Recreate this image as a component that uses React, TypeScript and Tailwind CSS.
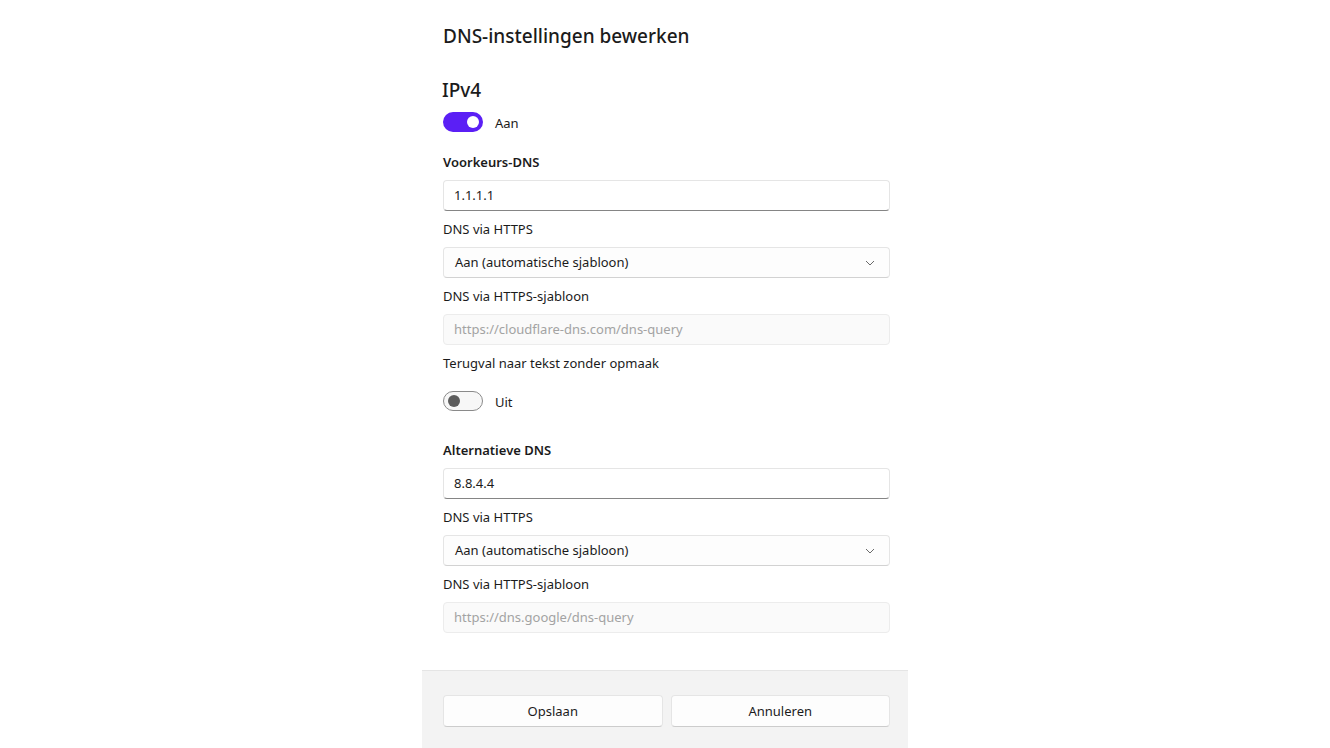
const font = { fontFamily: '"Segoe UI", "Noto Sans", "Open Sans", sans-serif' };

const Toggle = ({ on, label }: { on: boolean; label: string }) => (
  <div className="flex items-center h-5">
    {on ? (
      <div className="w-10 h-5 rounded-full bg-[#5b1ff5] flex items-center justify-end pr-[4px]">
        <div className="w-3 h-3 rounded-full bg-white" />
      </div>
    ) : (
      <div className="w-10 h-5 rounded-full border border-[#8a8a8a] bg-[#f7f7f7] flex items-center pl-[4px]">
        <div className="w-3 h-3 rounded-full bg-[#5c5c5c]" />
      </div>
    )}
    <span className="ml-3 pt-[3px] text-[13px] text-[#1b1b1b]">{label}</span>
  </div>
);

const Label = ({ children, bold }: { children: string; bold?: boolean }) => (
  <div className={`h-5 leading-5 text-[13px] text-[#1b1b1b] ${bold ? "font-semibold" : ""}`}>{children}</div>
);

const TextInput = ({ value }: { value: string }) => (
  <div className="mt-2 h-[31px] rounded-[4px] border border-[#e5e5e5] border-b-[#858585] bg-white flex items-center px-[10px] text-[13px] text-[#1b1b1b]">
    {value}
  </div>
);

const Select = ({ value }: { value: string }) => (
  <div className="mt-2 h-[31px] rounded-[4px] border border-[#e5e5e5] border-b-[#d2d2d2] bg-[#fdfdfd] flex items-center justify-between pl-[11px] pr-[14px] text-[13px] text-[#1b1b1b]">
    <span>{value}</span>
    <svg width="10" height="6" viewBox="0 0 10 6" fill="none">
      <path d="M1 1l4 4 4-4" stroke="#6a6a6a" strokeWidth="1" />
    </svg>
  </div>
);

const Disabled = ({ value }: { value: string }) => (
  <div className="mt-2 h-[31px] rounded-[4px] border border-[#ececec] bg-[#fafafa] flex items-center px-[10px] text-[13px] text-[#a3a3a3]">
    {value}
  </div>
);

export default function App() {
  return (
    <div className="w-[1330px] h-[748px] bg-white flex justify-center" style={font}>
      <div className="w-[486px] h-full flex flex-col">
        <div className="flex-1 pl-[21px] pr-[18px] pt-[22px]">
          <h1 className="h-7 leading-7 text-[19px] font-medium text-[#1b1b1b]">DNS-instellingen bewerken</h1>
          <h2 className="mt-[26px] -ml-[1px] h-7 leading-7 text-[19px] font-medium text-[#1b1b1b]">IPv4</h2>
          <div className="mt-2">
            <Toggle on label="Aan" />
          </div>
          <div className="mt-5">
            <Label bold>Voorkeurs-DNS</Label>
          </div>
          <TextInput value="1.1.1.1" />
          <div className="mt-2"><Label>DNS via HTTPS</Label></div>
          <Select value="Aan (automatische sjabloon)" />
          <div className="mt-2"><Label>DNS via HTTPS-sjabloon</Label></div>
          <Disabled value="https://cloudflare-dns.com/dns-query" />
          <div className="mt-2"><Label>Terugval naar tekst zonder opmaak</Label></div>
          <div className="mt-[18px]">
            <Toggle on={false} label="Uit" />
          </div>
          <div className="mt-[29px]">
            <Label bold>Alternatieve DNS</Label>
          </div>
          <TextInput value="8.8.4.4" />
          <div className="mt-2"><Label>DNS via HTTPS</Label></div>
          <Select value="Aan (automatische sjabloon)" />
          <div className="mt-2"><Label>DNS via HTTPS-sjabloon</Label></div>
          <Disabled value="https://dns.google/dns-query" />
        </div>
        <div className="h-[78px] bg-[#f3f3f3] border-t border-[#e5e5e5] pl-[21px] pr-[18px] pt-[24px] flex gap-2">
          <button className="flex-1 h-8 pt-[2px] rounded-[4px] border border-[#e5e5e5] border-b-[#cccccc] bg-[#fdfdfd] text-[13px] text-[#1b1b1b]">
            Opslaan
          </button>
          <button className="flex-1 h-8 pt-[2px] rounded-[4px] border border-[#e5e5e5] border-b-[#cccccc] bg-[#fdfdfd] text-[13px] text-[#1b1b1b]">
            Annuleren
          </button>
        </div>
      </div>
    </div>
  );
}
